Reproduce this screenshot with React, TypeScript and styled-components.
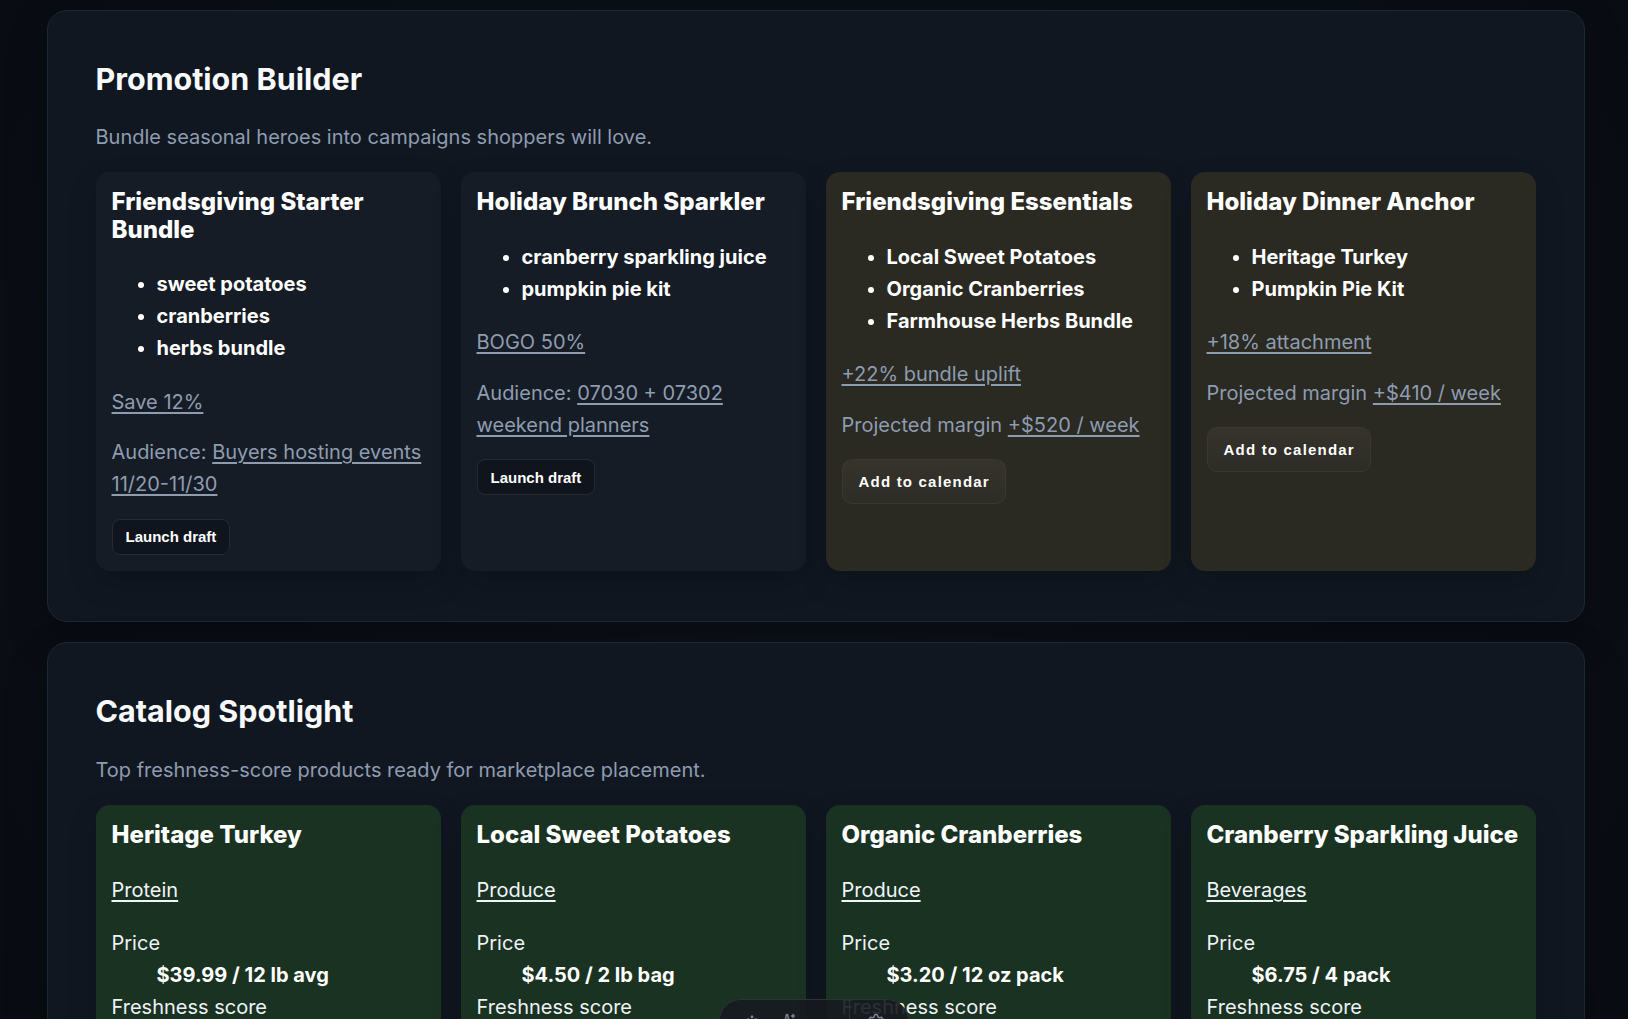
import React from "react";
import styled, { createGlobalStyle } from "styled-components";
import { PersonStanding, Sparkles, Minus, Settings } from "lucide-react";

const Global = createGlobalStyle`
  html { scrollbar-width: none; }
  html::-webkit-scrollbar, body::-webkit-scrollbar { display: none; }
  * { box-sizing: border-box; }
  body {
    margin: 0;
    font-family: "Inter", "Noto Sans", sans-serif;
    font-size: 20px;
    line-height: 1.6;
    color: #f8fafc;
    background: radial-gradient(ellipse at 50% 40%, #0e131b 0%, #0b0f16 55%, #080b11 100%);
    min-height: 100vh;
  }
`;

const Page = styled.main`
  display: flex;
  flex-direction: column;
  gap: 20.5px;
  padding: 9.5px 43.5px 60px 46.5px;
`;

const Panel = styled.section`
  background: #111721;
  border: 1px solid #1b2833;
  border-radius: 20px;
  padding: 50px 48px 50px;
  box-shadow: 0 18px 40px rgba(0, 0, 0, 0.28);
`;

const PanelTitle = styled.h2`
  margin: 0 0 24.5px;
  font-size: 30.5px;
  line-height: 36px;
  font-weight: 700;
  color: #f8fafc;
`;

const PanelLead = styled.p`
  margin: 0 0 19.3px;
  color: #8e9cb0;
`;

const CardGrid = styled.div`
  display: grid;
  grid-template-columns: repeat(4, 1fr);
  gap: 20px;
`;

const Card = styled.article<{ $tone: "plain" | "warm" | "green" }>`
  display: flex;
  flex-direction: column;
  align-items: flex-start;
  padding: 16px;
  border-radius: 14px;
  background: ${(p) =>
    p.$tone === "warm" ? "#2a2922" : p.$tone === "green" ? "#1a3222" : "#161c25"};
  box-shadow: 0 12px 28px rgba(0, 0, 0, 0.22);
`;

const CardTitle = styled.h3`
  margin: 0 0 25px;
  font-size: 24px;
  line-height: 1.15;
  font-weight: 800;
  color: #ffffff;
`;

const ItemList = styled.ul`
  margin: 0 0 21.5px;
  padding-left: 45px;
`;

const Item = styled.li`
  font-weight: 700;
  color: #ffffff;
`;

const Line = styled.p<{ $light?: boolean }>`
  margin: 0 0 ${(p) => (p.$light ? "21.5px" : "18.5px")};
  color: ${(p) => (p.$light ? "#f1f5f9" : "#8e9cb0")};
`;

const Link = styled.a<{ $light?: boolean }>`
  color: ${(p) => (p.$light ? "#f1f5f9" : "#8e9cb0")};
  text-decoration: underline;
  text-decoration-thickness: 1.5px;
  text-underline-offset: 3px;
  cursor: pointer;
`;

const Action = styled.button<{ $big?: boolean }>`
  font-family: "Liberation Sans", Arial, sans-serif;
  font-size: 15px;
  line-height: 17px;
  font-weight: 700;
  color: #ffffff;
  letter-spacing: ${(p) => (p.$big ? "0.08em" : "0")};
  padding: ${(p) => (p.$big ? "13px 15px 13px 16px" : "8.5px 13px")};
  border-radius: ${(p) => (p.$big ? "10px" : "8px")};
  border: 1px solid ${(p) => (p.$big ? "#3a3831" : "#242b36")};
  background: ${(p) =>
    p.$big ? "linear-gradient(180deg, #35332c 0%, #2e2c26 100%)" : "#10151d"};
  cursor: pointer;
`;

const Specs = styled.dl`
  margin: 0;
`;

const SpecLabel = styled.dt`
  color: #eef2f6;
`;

const SpecValue = styled.dd`
  margin: 0 0 0 45px;
  font-weight: 700;
  color: #ffffff;
`;

const Dock = styled.div`
  position: fixed;
  left: 50%;
  bottom: -25px;
  transform: translateX(-50%);
  width: 190px;
  height: 45px;
  display: flex;
  align-items: center;
  justify-content: space-around;
  padding: 0 14px;
  background: rgba(22, 25, 31, 0.9);
  border: 1px solid #2c313a;
  border-radius: 22px;
  color: #7d838e;
`;

const DockDivider = styled.span`
  width: 1px;
  height: 45px;
  background: #2c313a;
`;

type Promo = {
  title: string;
  items: string[];
  offer: string;
  label: string;
  detail: string;
  action: string;
  warm?: boolean;
};

const promos: Promo[] = [
  {
    title: "Friendsgiving Starter Bundle",
    items: ["sweet potatoes", "cranberries", "herbs bundle"],
    offer: "Save 12%",
    label: "Audience:",
    detail: "Buyers hosting events 11/20-11/30",
    action: "Launch draft",
  },
  {
    title: "Holiday Brunch Sparkler",
    items: ["cranberry sparkling juice", "pumpkin pie kit"],
    offer: "BOGO 50%",
    label: "Audience:",
    detail: "07030 + 07302 weekend planners",
    action: "Launch draft",
  },
  {
    title: "Friendsgiving Essentials",
    items: ["Local Sweet Potatoes", "Organic Cranberries", "Farmhouse Herbs Bundle"],
    offer: "+22% bundle uplift",
    label: "Projected margin",
    detail: "+$520 / week",
    action: "Add to calendar",
    warm: true,
  },
  {
    title: "Holiday Dinner Anchor",
    items: ["Heritage Turkey", "Pumpkin Pie Kit"],
    offer: "+18% attachment",
    label: "Projected margin",
    detail: "+$410 / week",
    action: "Add to calendar",
    warm: true,
  },
];

const products = [
  { name: "Heritage Turkey", category: "Protein", price: "$39.99 / 12 lb avg", fresh: "96 / 100" },
  { name: "Local Sweet Potatoes", category: "Produce", price: "$4.50 / 2 lb bag", fresh: "94 / 100" },
  { name: "Organic Cranberries", category: "Produce", price: "$3.20 / 12 oz pack", fresh: "92 / 100" },
  { name: "Cranberry Sparkling Juice", category: "Beverages", price: "$6.75 / 4 pack", fresh: "90 / 100" },
];

export default function App() {
  return (
    <>
      <Global />
      <Page>
        <Panel>
          <PanelTitle>Promotion Builder</PanelTitle>
          <PanelLead>Bundle seasonal heroes into campaigns shoppers will love.</PanelLead>
          <CardGrid>
            {promos.map((p) => (
              <Card key={p.title} $tone={p.warm ? "warm" : "plain"}>
                <CardTitle>{p.title}</CardTitle>
                <ItemList>
                  {p.items.map((i) => (
                    <Item key={i}>{i}</Item>
                  ))}
                </ItemList>
                <Line>
                  <Link>{p.offer}</Link>
                </Line>
                <Line>
                  {p.label} <Link>{p.detail}</Link>
                </Line>
                <Action $big={p.warm}>{p.action}</Action>
              </Card>
            ))}
          </CardGrid>
        </Panel>
        <Panel>
          <PanelTitle>Catalog Spotlight</PanelTitle>
          <PanelLead>Top freshness-score products ready for marketplace placement.</PanelLead>
          <CardGrid>
            {products.map((p) => (
              <Card key={p.name} $tone="green">
                <CardTitle>{p.name}</CardTitle>
                <Line $light>
                  <Link $light>{p.category}</Link>
                </Line>
                <Specs>
                  <SpecLabel>Price</SpecLabel>
                  <SpecValue>{p.price}</SpecValue>
                  <SpecLabel>Freshness score</SpecLabel>
                  <SpecValue>{p.fresh}</SpecValue>
                </Specs>
              </Card>
            ))}
          </CardGrid>
        </Panel>
      </Page>
      <Dock>
        <PersonStanding size={18} />
        <Sparkles size={18} />
        <Minus size={18} />
        <DockDivider />
        <Settings size={18} />
      </Dock>
    </>
  );
}
